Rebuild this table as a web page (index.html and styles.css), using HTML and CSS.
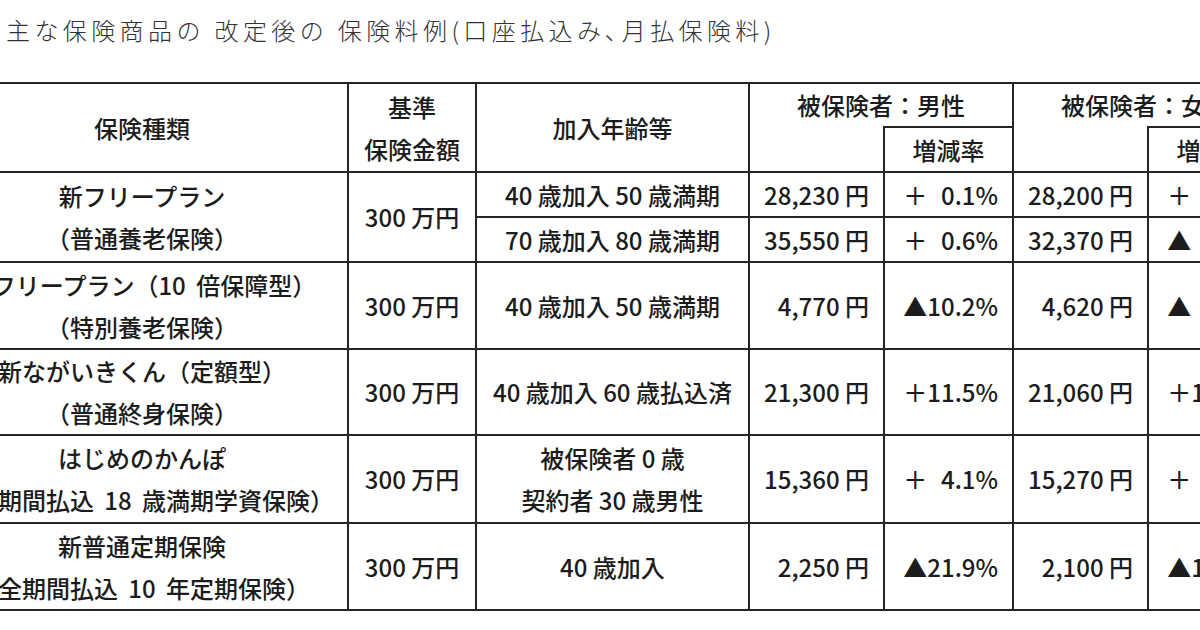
FILE: index.html
```html
<!DOCTYPE html>
<html lang="ja">
<head>
<meta charset="utf-8">
<title>主な保険商品の改定後の保険料例</title>
<link rel="stylesheet" href="styles.css">
</head>
<body>
<div class="page">
  <h1 class="title">主な保険商品の 改定後の 保険料例(口座払込み､月払保険料)</h1>
  <div class="table-wrap">
    <table class="rates">
      <colgroup>
        <col class="c-type"><col class="c-amount"><col class="c-age"><col class="c-prem"><col class="c-rate"><col class="c-prem"><col class="c-rate">
      </colgroup>
      <thead>
        <tr class="h-top">
          <th rowspan="2">保険種類</th>
          <th rowspan="2">基準<br>保険金額</th>
          <th rowspan="2">加入年齢等</th>
          <th colspan="2" class="grp">被保険者：男性</th>
          <th colspan="2" class="grp">被保険者：女性</th>
        </tr>
        <tr class="h-bot">
          <th class="blank"></th>
          <th class="sub">増減率</th>
          <th class="blank"></th>
          <th class="sub">増減率</th>
        </tr>
      </thead>
      <tbody>
        <tr class="r-half">
          <td rowspan="2" class="name">新フリープラン<br>（普通養老保険）</td>
          <td rowspan="2">300 万円</td>
          <td>40 歳加入 50 歳満期</td>
          <td class="num">28,230 円</td>
          <td class="num">＋&#x2007;0.1%</td>
          <td class="num">28,200 円</td>
          <td class="num">＋&#x2007;0.2%</td>
        </tr>
        <tr class="r-half">
          <td>70 歳加入 80 歳満期</td>
          <td class="num">35,550 円</td>
          <td class="num">＋&#x2007;0.6%</td>
          <td class="num">32,370 円</td>
          <td class="num">▲&#x2007;0.5%</td>
        </tr>
        <tr class="r2">
          <td class="name">新フリープラン（10 倍保障型）<br>（特別養老保険）</td>
          <td>300 万円</td>
          <td>40 歳加入 50 歳満期</td>
          <td class="num">4,770 円</td>
          <td class="num">▲10.2%</td>
          <td class="num">4,620 円</td>
          <td class="num">▲&#x2007;9.8%</td>
        </tr>
        <tr class="r3">
          <td class="name">新ながいきくん（定額型）<br>（普通終身保険）</td>
          <td>300 万円</td>
          <td>40 歳加入 60 歳払込済</td>
          <td class="num">21,300 円</td>
          <td class="num">＋11.5%</td>
          <td class="num">21,060 円</td>
          <td class="num">＋12.1%</td>
        </tr>
        <tr class="r4">
          <td class="name">はじめのかんぽ<br>（全期間払込 18 歳満期学資保険）</td>
          <td>300 万円</td>
          <td>被保険者 0 歳<br>契約者 30 歳男性</td>
          <td class="num">15,360 円</td>
          <td class="num">＋&#x2007;4.1%</td>
          <td class="num">15,270 円</td>
          <td class="num">＋&#x2007;4.0%</td>
        </tr>
        <tr class="r5">
          <td class="name">新普通定期保険<br>（全期間払込 10 年定期保険）</td>
          <td>300 万円</td>
          <td>40 歳加入</td>
          <td class="num">2,250 円</td>
          <td class="num">▲21.9%</td>
          <td class="num">2,100 円</td>
          <td class="num">▲18.6%</td>
        </tr>
      </tbody>
    </table>
  </div>
</div>
</body>
</html>
```

FILE: styles.css
```css
html, body {
  margin: 0;
  padding: 0;
  background: #ffffff;
}

body {
  width: 1200px;
  height: 630px;
  overflow: hidden;
  font-family: "Noto Sans CJK JP", "Noto Sans", sans-serif;
  color: #222222;
}

.page {
  width: 1200px;
  height: 630px;
  overflow: hidden;
}

.title {
  margin: 0;
  padding: 14px 0 0 6px;
  font-size: 24px;
  line-height: 32px;
  font-weight: 300;
  letter-spacing: 4.4px;
  color: #333333;
  white-space: nowrap;
}

.table-wrap {
  margin-top: 36px;
  margin-left: -65px;
  width: 1341px;
}

.rates {
  border-collapse: collapse;
  table-layout: fixed;
  width: 1341px;
  font-size: 24px;
}

.c-type { width: 412px; }
.c-amount { width: 128px; }
.c-age { width: 273px; }
.c-prem { width: 135px; }
.c-rate { width: 129px; }

.rates th,
.rates td {
  border: 2px solid #262626;
  padding: 0;
  text-align: center;
  vertical-align: middle;
  line-height: 42px;
  font-weight: 500;
  white-space: nowrap;
  overflow: hidden;
  color: #1c1c1c;
}

.rates .name { word-spacing: 5px; }

.rates .grp { border-bottom: none; }
.rates .blank { border-top: none; }

.rates .num {
  text-align: right;
  padding-right: 14px;
}

.h-top { height: 44px; }
.h-bot { height: 45px; }
.r-half { height: 45px; }
.r2 { height: 87px; }
.r3 { height: 86px; }
.r4 { height: 88px; }
.r5 { height: 87px; }
```
